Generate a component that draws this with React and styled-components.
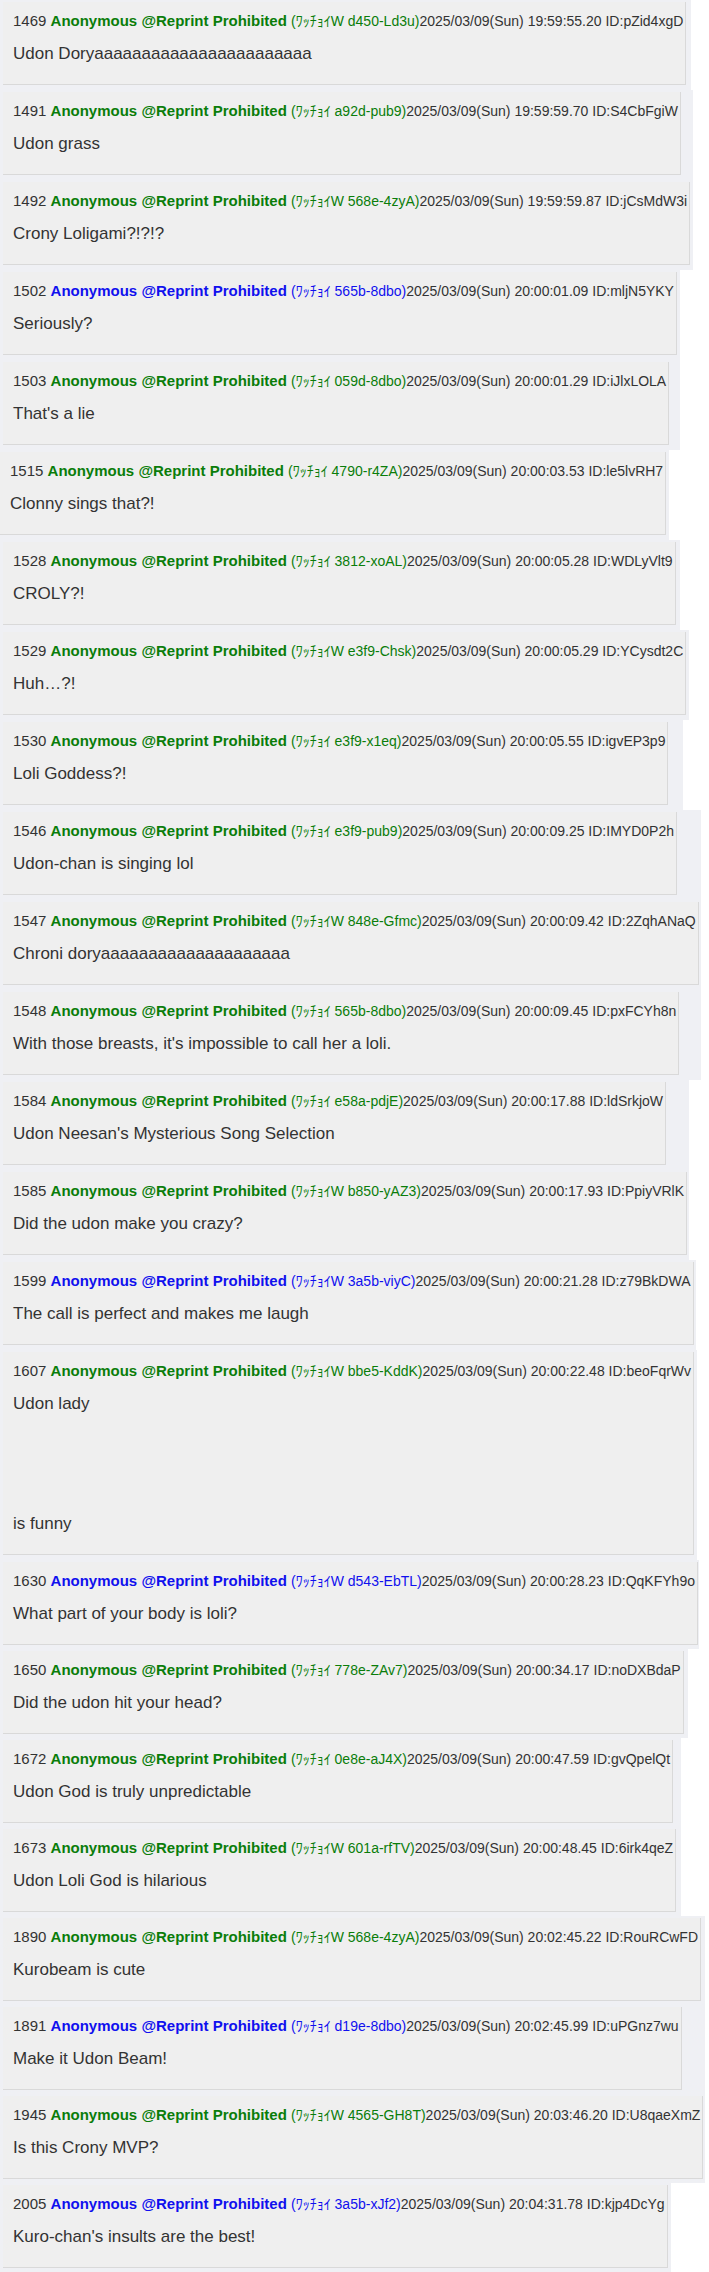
import styled, { createGlobalStyle } from "styled-components";

const GlobalStyle = createGlobalStyle`
  html, body {
    margin: 0;
    padding: 0;
    background: #ffffff;
  }
  body {
    font-family: "Liberation Sans", Arial, "Noto Sans CJK JP", sans-serif;
    color: #333;
  }
`;

const nameColors = {
  g: "#0a7d0a",
  b: "#1010ee",
};

const posts = [
  { no: 1469, c: "g", trip: "ﾜｯﾁｮｲW d450-Ld3u", time: "19:59:55.20", id: "pZid4xgD", body: ["Udon Dory" + "a".repeat(23)], tail: 5 },
  { no: 1491, c: "g", trip: "ﾜｯﾁｮｲ a92d-pub9", time: "19:59:59.70", id: "S4CbFgiW", body: ["Udon grass"], tail: 12 },
  { no: 1492, c: "g", trip: "ﾜｯﾁｮｲW 568e-4zyA", time: "19:59:59.87", id: "jCsMdW3i", body: ["Crony Loligami?!?!?"], tail: 3 },
  { no: 1502, c: "b", trip: "ﾜｯﾁｮｲ 565b-8dbo", time: "20:00:01.09", id: "mljN5YKY", body: ["Seriously?"], tail: 3 },
  { no: 1503, c: "g", trip: "ﾜｯﾁｮｲ 059d-8dbo", time: "20:00:01.29", id: "iJlxLOLA", body: ["That's a lie"], tail: 11 },
  { no: 1515, c: "g", trip: "ﾜｯﾁｮｲ 4790-r4ZA", time: "20:00:03.53", id: "le5lvRH7", body: ["Clonny sings that?!"], tail: 3, flush: true },
  { no: 1528, c: "g", trip: "ﾜｯﾁｮｲ 3812-xoAL", time: "20:00:05.28", id: "WDLyVlt9", body: ["CROLY?!"], tail: 4 },
  { no: 1529, c: "g", trip: "ﾜｯﾁｮｲW e3f9-Chsk", time: "20:00:05.29", id: "YCysdt2C", body: ["Huh…?!"], tail: 3 },
  { no: 1530, c: "g", trip: "ﾜｯﾁｮｲ e3f9-x1eq", time: "20:00:05.55", id: "igvEP3p9", body: ["Loli Goddess?!"], tail: 15 },
  { no: 1546, c: "g", trip: "ﾜｯﾁｮｲ e3f9-pub9", time: "20:00:09.25", id: "IMYD0P2h", body: ["Udon-chan is singing lol"], tail: 24 },
  { no: 1547, c: "g", trip: "ﾜｯﾁｮｲW 848e-Gfmc", time: "20:00:09.42", id: "2ZqhANaQ", body: ["Chroni dory" + "a".repeat(20)], tail: 2 },
  { no: 1548, c: "g", trip: "ﾜｯﾁｮｲ 565b-8dbo", time: "20:00:09.45", id: "pxFCYh8n", body: ["With those breasts, it's impossible to call her a loli."], tail: 22 },
  { no: 1584, c: "g", trip: "ﾜｯﾁｮｲ e58a-pdjE", time: "20:00:17.88", id: "ldSrkjoW", body: ["Udon Neesan's Mysterious Song Selection"], tail: 23 },
  { no: 1585, c: "g", trip: "ﾜｯﾁｮｲW b850-yAZ3", time: "20:00:17.93", id: "PpiyVRlK", body: ["Did the udon make you crazy?"], tail: 2 },
  { no: 1599, c: "b", trip: "ﾜｯﾁｮｲW 3a5b-viyC", time: "20:00:21.28", id: "z79BkDWA", body: ["The call is perfect and makes me laugh"], tail: 2 },
  { no: 1607, c: "g", trip: "ﾜｯﾁｮｲW bbe5-KddK", time: "20:00:22.48", id: "beoFqrWv", body: ["Udon lady", "", "", "", "", "is funny"], tail: 3 },
  { no: 1630, c: "b", trip: "ﾜｯﾁｮｲW d543-EbTL", time: "20:00:28.23", id: "QqKFYh9o", body: ["What part of your body is loli?"], tail: 1, tight: true },
  { no: 1650, c: "g", trip: "ﾜｯﾁｮｲ 778e-ZAv7", time: "20:00:34.17", id: "noDXBdaP", body: ["Did the udon hit your head?"], tail: 4, tight: true },
  { no: 1672, c: "g", trip: "ﾜｯﾁｮｲ 0e8e-aJ4X", time: "20:00:47.59", id: "gvQpelQt", body: ["Udon God is truly unpredictable"], tail: 8, tight: true },
  { no: 1673, c: "g", trip: "ﾜｯﾁｮｲW 601a-rfTV", time: "20:00:48.45", id: "6irk4qeZ", body: ["Udon Loli God is hilarious"], tail: 5, tight: true },
  { no: 1890, c: "g", trip: "ﾜｯﾁｮｲW 568e-4zyA", time: "20:02:45.22", id: "RouRCwFD", body: ["Kurobeam is cute"], tail: 4, tight: true },
  { no: 1891, c: "b", trip: "ﾜｯﾁｮｲ d19e-8dbo", time: "20:02:45.99", id: "uPGnz7wu", body: ["Make it Udon Beam!"], tail: 23, tight: true },
  { no: 1945, c: "g", trip: "ﾜｯﾁｮｲW 4565-GH8T", time: "20:03:46.20", id: "U8qaeXmZ", body: ["Is this Crony MVP?"], tail: 2, tight: true },
  { no: 2005, c: "b", trip: "ﾜｯﾁｮｲ 3a5b-xJf2", time: "20:04:31.78", id: "kjp4DcYg", body: ["Kuro-chan's insults are the best!"], tail: 3, tight: true },
];

const Page = styled.main`
  display: flex;
  flex-direction: column;
  align-items: flex-start;
`;

const Shot = styled.section`
  background: #eff0f4;
  padding: 2px ${(p) => p.$tail}px ${(p) => (p.$tight ? 4 : 5)}px
    ${(p) => (p.$flush ? 0 : 3)}px;
`;

const Post = styled.article`
  background: #efefef;
  border-right: 1px solid #d9d9d9;
  border-bottom: 1px solid #d9d9d9;
  padding: 9px 2px 18px 10px;
`;

const Header = styled.div`
  font-size: 15px;
  line-height: 20px;
  white-space: nowrap;
  color: #333;
`;

const Name = styled.b`
  color: ${(p) => nameColors[p.$c]};
  font-weight: bold;
`;

const Trip = styled.span`
  color: ${(p) => nameColors[p.$c]};
  font-size: 14px;
`;

const Stamp = styled.span`
  font-size: 14px;
`;

const Message = styled.div`
  margin-top: 11px;
  font-size: 17px;
  line-height: 24px;
  color: #333;
  white-space: nowrap;
`;

export default function App() {
  return (
    <>
      <GlobalStyle />
      <Page>
        {posts.map((p) => (
          <Shot key={p.no} $tail={p.tail} $tight={p.tight} $flush={p.flush}>
            <Post>
              <Header>
                {p.no} <Name $c={p.c}>Anonymous @Reprint Prohibited</Name>{" "}
                <Trip $c={p.c}>({p.trip})</Trip>
                <Stamp>
                  2025/03/09(Sun) {p.time} ID:{p.id}
                </Stamp>
              </Header>
              <Message>
                {p.body.map((line, i) => (
                  <span key={i}>
                    {i > 0 && <br />}
                    {line}
                  </span>
                ))}
              </Message>
            </Post>
          </Shot>
        ))}
      </Page>
    </>
  );
}
